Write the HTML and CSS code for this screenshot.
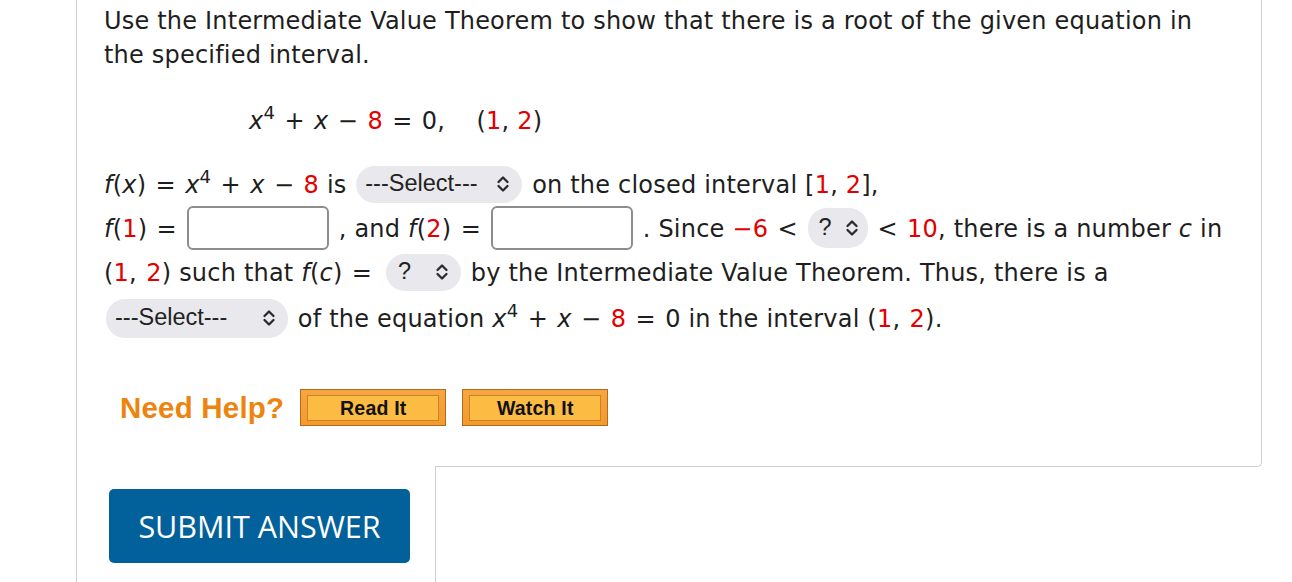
FILE: index.html
```html
<!DOCTYPE html>
<html>
<head>
<meta charset="utf-8">
<link rel="stylesheet" href="styles.css">
</head>
<body>
<div class="panel">
  <div class="question">
    <p class="intro">Use the Intermediate Value Theorem to show that there is a root of the given equation in the specified interval.</p>
    <div class="equation"><span class="m"><i>x</i><sup>4</sup> + <i>x</i> &minus; <span class="red">8</span> = 0,</span> &nbsp;&nbsp;&nbsp;(<span class="red">1</span>, <span class="red">2</span>)</div>
    <div class="line l1"><span class="m"><i>f</i>(<i>x</i>) = <i>x</i><sup>4</sup> + <i>x</i> &minus; <span class="red">8</span></span> is <span class="sel w1"><span>---Select---</span><svg class="chev" viewBox="0 0 14 18"><path d="M2.5 7 L7 2.5 L11.5 7 M2.5 11 L7 15.5 L11.5 11"/></svg></span> on the closed interval [<span class="red">1</span>, <span class="red">2</span>],</div>
    <div class="line l2"><span class="m"><i>f</i>(<span class="red">1</span>) =</span> <span class="box"></span>, and <span class="m"><i>f</i>(<span class="red">2</span>) =</span> <span class="box"></span>. Since <span class="m"><span class="red">&minus;6</span> &lt;</span> <span class="sel w2"><span>?</span><svg class="chev" viewBox="0 0 14 18"><path d="M2.5 7 L7 2.5 L11.5 7 M2.5 11 L7 15.5 L11.5 11"/></svg></span> <span class="m">&lt; <span class="red">10</span></span>, there is a number <i>c</i> in</div>
    <div class="line l3"><span class="m">(<span class="red">1</span>, <span class="red">2</span>)</span> such that <span class="m"><i>f</i>(<i>c</i>) =</span> <span class="sel w3"><span>?</span><svg class="chev" viewBox="0 0 14 18"><path d="M2.5 7 L7 2.5 L11.5 7 M2.5 11 L7 15.5 L11.5 11"/></svg></span> by the Intermediate Value Theorem. Thus, there is a</div>
    <div class="line l4"><span class="sel w4"><span>---Select---</span><svg class="chev" viewBox="0 0 14 18"><path d="M2.5 7 L7 2.5 L11.5 7 M2.5 11 L7 15.5 L11.5 11"/></svg></span> of the equation <span class="m"><i>x</i><sup>4</sup> + <i>x</i> &minus; <span class="red">8</span> = 0</span> in the interval <span class="m">(<span class="red">1</span>, <span class="red">2</span>)</span>.</div>
    <div class="help">
      <span class="help-label">Need Help?</span>
      <span class="hbtn"><span class="hbtn-in">Read It</span></span>
      <span class="hbtn"><span class="hbtn-in">Watch It</span></span>
    </div>
  </div>
  <div class="bottom">
    <div class="submit-col"><button class="submit">SUBMIT ANSWER</button></div>
    <div class="filler"></div>
  </div>
</div>
</body>
</html>
```
FILE: styles.css
```css
html, body { margin: 0; padding: 0; background: #fff; }
body { width: 1292px; height: 582px; overflow: hidden; }

.panel {
  margin-left: 76px;
  width: 1185px;
  border-left: 1px solid #cfcfcf;
  height: 582px;
  display: flex;
  flex-direction: column;
}

.question {
  font-family: "DejaVu Sans", Verdana, sans-serif;
  font-size: 24px;
  letter-spacing: 0.2px;
  color: #1e1e1e;
  padding: 4px 0 0 27px;
  border-right: 1px solid #cfcfcf;
  border-bottom: 1px solid #cfcfcf;
  border-bottom-right-radius: 5px;
  height: 467px;
  box-sizing: border-box;
  flex: none;
}

.intro { margin: 0; line-height: 34px; width: 1110px; }

.red { color: #e30000; }
i { font-style: italic; }
.m { word-spacing: 1.5px; }
sup { font-size: 0.75em; vertical-align: 0; position: relative; top: -0.55em; line-height: 0; }

.equation {
  margin-top: 32px;
  padding-left: 145px;
  line-height: 34px;
  white-space: nowrap;
}

.line {
  white-space: nowrap;
  line-height: 44px;
  height: 44px;
}
.l1 { margin-top: 25px; }
.l4 { height: 48px; line-height: 48px; }

.sel {
  display: inline-flex;
  align-items: center;
  justify-content: space-between;
  vertical-align: middle;
  background: #e9e9ed;
  border-radius: 19px;
  height: 37px;
  box-sizing: border-box;
  padding: 0 12px 0 9px;
  font-family: "Liberation Sans", Arial, sans-serif;
  font-size: 23.5px;
  letter-spacing: 0;
  word-spacing: 0;
  line-height: 1;
  color: #222;
  margin: -4px 2px 0 2px;
}
.w1 { width: 166px; }
.w2 { width: 60px; height: 40px; padding-left: 11px; padding-right: 9px; }
.w3 { width: 75px; padding-left: 12px; margin-left: 6px; }
.w4 { width: 182px; height: 39px; margin-left: 2px; }

.chev { width: 14px; height: 18px; fill: none; stroke: #2a2a2a; stroke-width: 2.3; stroke-linecap: round; stroke-linejoin: round; }

.box {
  display: inline-block;
  vertical-align: middle;
  width: 142px;
  height: 44px;
  box-sizing: border-box;
  border: 2px solid #8d8d8d;
  border-radius: 6px;
  background: #fff;
  margin: -4px 10px 0 2px;
}

.help {
  display: flex;
  align-items: center;
  margin-top: 46px;
  padding-left: 16px;
  gap: 16px;
}
.help-label {
  font-family: "Liberation Sans", Arial, sans-serif;
  font-weight: bold;
  font-size: 29.5px;
  color: #ec840f;
}
.hbtn {
  display: inline-flex;
  width: 146px;
  height: 37px;
  box-sizing: border-box;
  border: 1px solid #b06a22;
  background: linear-gradient(#f8a640, #f49a28);
  padding: 5px 6px 4px 6px;
}
.hbtn-in {
  flex: 1;
  display: flex;
  align-items: center;
  justify-content: center;
  border: 1px solid #c5842f;
  background: #fcbb43;
  font-family: "Liberation Sans", Arial, sans-serif;
  font-weight: bold;
  font-size: 19.5px;
  color: #111;
}

.bottom { display: flex; flex: 1; }
.submit-col {
  width: 359px;
  box-sizing: border-box;
  border-right: 1px solid #cfcfcf;
  background: #fff;
  position: relative;
  margin-top: -1px;
  padding: 23px 0 0 32px;
}
.filler { flex: 1; }

.submit {
  width: 301px;
  height: 74px;
  background: #02619a;
  color: #fff;
  border: none;
  border-radius: 5px;
  font-family: "Open Sans", sans-serif;
  font-size: 30.5px;
  padding: 0;
  cursor: pointer;
}
```
